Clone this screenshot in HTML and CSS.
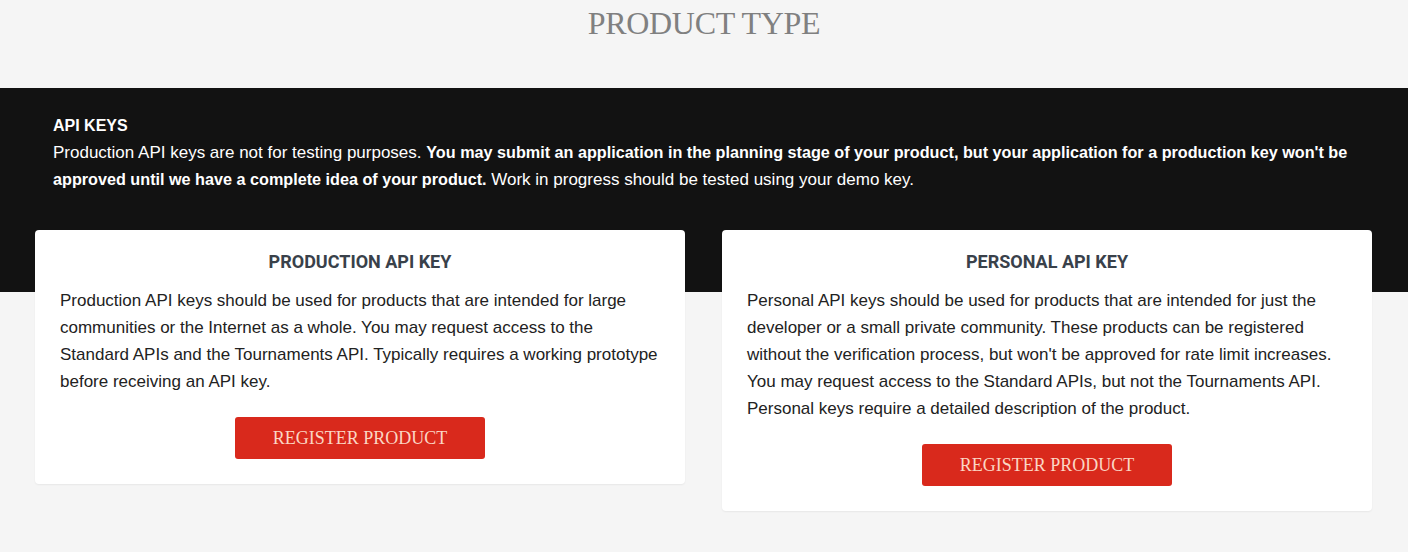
FILE: index.html
```html
<!DOCTYPE html>
<html lang="en">
<head>
<meta charset="utf-8">
<title>Product Type</title>
<link rel="stylesheet" href="styles.css">
</head>
<body>
<header class="page-head">
  <h1 class="page-title">PRODUCT TYPE</h1>
</header>
<section class="keys">
  <div class="intro">
    <h2 class="intro-title">API KEYS</h2>
    <p class="intro-text">Production API keys are not for testing purposes. <strong>You may submit an application in the planning stage of your product, but your application for a production key won't be approved until we have a complete idea of your product.</strong> Work in progress should be tested using your demo key.</p>
  </div>
  <div class="cards">
    <article class="card">
      <h3 class="card-title">PRODUCTION API KEY</h3>
      <p class="card-text">Production API keys should be used for products that are intended for large communities or the Internet as a whole. You may request access to the Standard APIs and the Tournaments API. Typically requires a working prototype before receiving an API key.</p>
      <div class="card-action"><button class="btn">REGISTER PRODUCT</button></div>
    </article>
    <article class="card">
      <h3 class="card-title">PERSONAL API KEY</h3>
      <p class="card-text">Personal API keys should be used for products that are intended for just the developer or a small private community. These products can be registered without the verification process, but won't be approved for rate limit increases. You may request access to the Standard APIs, but not the Tournaments API. Personal keys require a detailed description of the product.</p>
      <div class="card-action"><button class="btn">REGISTER PRODUCT</button></div>
    </article>
  </div>
</section>
</body>
</html>
```
FILE: styles.css
```css
* { box-sizing: border-box; }
html, body { margin: 0; padding: 0; }
body {
  background: #f5f5f5;
  font-family: "Liberation Sans", Arial, sans-serif;
  color: #222;
  width: 1408px;
  height: 552px;
  overflow: hidden;
}
.page-head {
  height: 88px;
  padding-top: 4px;
  text-align: center;
}
.page-title {
  margin: 0;
  font-family: "Liberation Serif", "Times New Roman", serif;
  font-weight: normal;
  font-size: 32px;
  line-height: 38px;
  letter-spacing: -0.3px;
  color: #808080;
}
.keys {
  background: linear-gradient(#121212 0, #121212 204px, transparent 204px);
  padding: 0 36px 0 35px;
}
.intro {
  padding: 24px 0 0 18px;
  color: #fff;
}
.intro-title {
  margin: 0;
  font-size: 16px;
  line-height: 27px;
  font-weight: bold;
}
.intro-text {
  margin: 0;
  font-size: 17px;
  line-height: 27px;
}
.intro-text strong {
  font-size: 16.2px;
  line-height: 27px;
}
.cards {
  margin-top: 37px;
  display: flex;
  align-items: flex-start;
  gap: 37px;
}
.card {
  flex: 0 0 650px;
  background: #fff;
  border-radius: 4px;
  box-shadow: 0 1px 2px rgba(0,0,0,0.06);
  padding: 20px 25px 25px 25px;
}
.card-title {
  margin: 0;
  text-align: center;
  font-family: Roboto, "Liberation Sans", sans-serif;
  font-weight: bold;
  font-size: 18px;
  line-height: 24px;
  color: #39414a;
}
.card-text {
  margin: 13px 0 0 0;
  font-size: 17px;
  line-height: 27px;
  color: #222;
}
.card-action {
  margin-top: 22px;
  display: flex;
  justify-content: center;
}
.btn {
  width: 250px;
  height: 42px;
  border: 0;
  border-radius: 3px;
  background: #d9291c;
  color: #fbd6c4;
  font-family: "Liberation Serif", "Times New Roman", serif;
  font-size: 18px;
  letter-spacing: 0;
  cursor: pointer;
}
```
